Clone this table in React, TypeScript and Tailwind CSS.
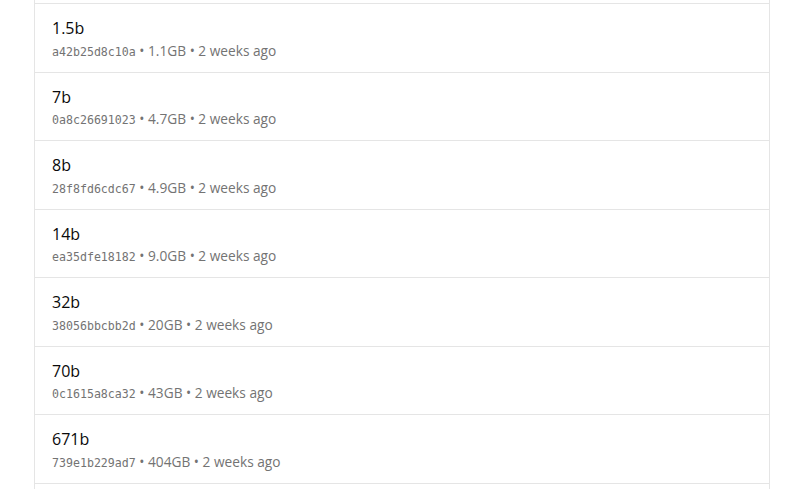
import React from "react";

interface Tag {
  name: string;
  digest: string;
  size: string;
  updated: string;
}

const tags: Tag[] = [
  { name: "1.5b", digest: "a42b25d8c10a", size: "1.1GB", updated: "2 weeks ago" },
  { name: "7b", digest: "0a8c26691023", size: "4.7GB", updated: "2 weeks ago" },
  { name: "8b", digest: "28f8fd6cdc67", size: "4.9GB", updated: "2 weeks ago" },
  { name: "14b", digest: "ea35dfe18182", size: "9.0GB", updated: "2 weeks ago" },
  { name: "32b", digest: "38056bbcbb2d", size: "20GB", updated: "2 weeks ago" },
  { name: "70b", digest: "0c1615a8ca32", size: "43GB", updated: "2 weeks ago" },
  { name: "671b", digest: "739e1b229ad7", size: "404GB", updated: "2 weeks ago" },
];

const App: React.FC = () => {
  return (
    <div className="h-[489px] overflow-hidden bg-white font-['Open_Sans','Noto_Sans',sans-serif]">
      <div className="mx-[34px] w-[736px] border-x border-[#e5e5e5]">
        {/* tail of the row scrolled above */}
        <div className="h-[3px]" />
        {tags.map((tag) => (
          <a
            key={tag.name}
            href="#"
            className="flex flex-col border-t border-[#e5e5e5] px-[17px] py-[12px] hover:bg-neutral-50"
          >
            <span className="h-[24.5px] text-[16px] leading-[24.5px] text-[#0a0a0a]">{tag.name}</span>
            <span className="h-[19px] whitespace-nowrap text-[13.7px] leading-[19px] text-[#737373]">
              <span className="font-['DejaVu_Sans_Mono',monospace] text-[11.6px] leading-none">{tag.digest}</span>
              {" • "}
              {tag.size}
              {" • "}
              {tag.updated}
            </span>
          </a>
        ))}
        <div className="h-[20px] border-t border-[#e5e5e5]" />
      </div>
    </div>
  );
};

export default App;
